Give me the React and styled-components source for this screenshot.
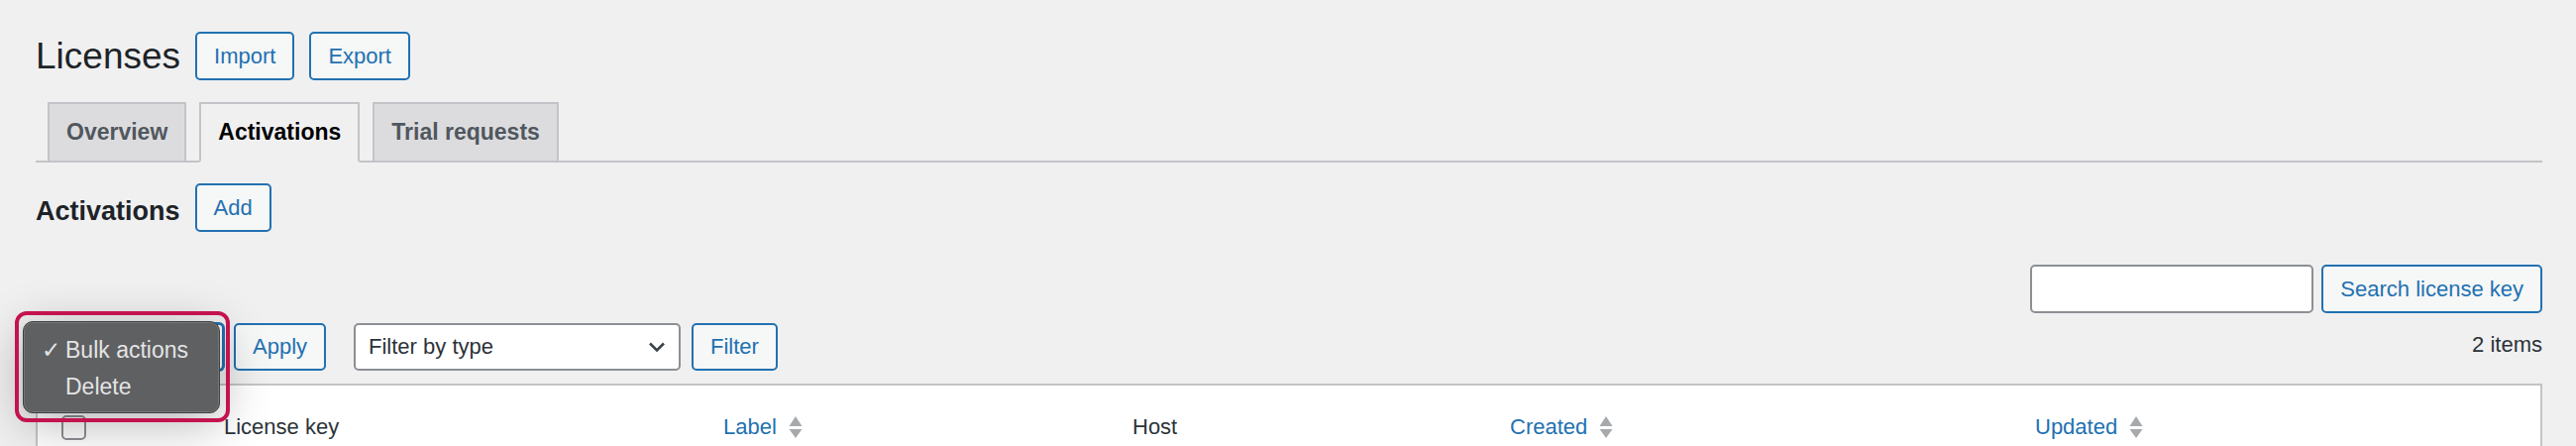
import React from "react";
import styled, { createGlobalStyle } from "styled-components";

const GlobalStyle = createGlobalStyle`
  html, body { margin: 0; padding: 0; background: #f0f0f1; }
  body { font-family: "Liberation Sans", Arial, sans-serif; color: #2c3338; }
  * { box-sizing: border-box; }
`;

const Wrap = styled.div`
  padding: 0 34px 0 36px;
  display: flex;
  flex-direction: column;
  height: 450px;
  overflow: hidden;
`;

const TitleRow = styled.div`
  margin-top: 32px;
  height: 49px;
  display: flex;
  align-items: center;
  gap: 15px;
`;

const PageTitle = styled.h1`
  margin: 0;
  font-size: 37px;
  font-weight: 400;
  color: #1d2327;
  line-height: 1;
`;

const Button = styled.button`
  height: ${(p) => p.$h || 49}px;
  padding: 0 17px;
  border: 2px solid #2271b1;
  border-radius: 5px;
  background: #f6f7f7;
  color: #2271b1;
  font-family: "Liberation Sans", Arial, sans-serif;
  font-size: 22px;
  line-height: 1;
  display: inline-flex;
  align-items: center;
  white-space: nowrap;
  cursor: pointer;
`;

const TabBar = styled.div`
  margin-top: 22px;
  display: flex;
  align-items: flex-end;
  border-bottom: 2px solid #c3c4c7;
  padding-left: 12px;
  gap: 13px;
`;

const Tab = styled.div`
  height: 61px;
  margin-bottom: -2px;
  padding: 0 17px;
  border: 2px solid #c3c4c7;
  border-bottom-color: ${(p) => (p.$active ? "#f0f0f1" : "#c3c4c7")};
  background: ${(p) => (p.$active ? "#f0f0f1" : "#dcdcde")};
  color: ${(p) => (p.$active ? "#000" : "#50575e")};
  font-size: 23px;
  font-weight: 700;
  display: flex;
  align-items: center;
  white-space: nowrap;
`;

const SectionRow = styled.div`
  margin-top: 21px;
  height: 49px;
  display: flex;
  align-items: center;
  gap: 15px;
`;

const SectionTitle = styled.h2`
  margin: 0;
  padding-top: 7px;
  font-size: 27px;
  font-weight: 700;
  color: #1d2327;
  line-height: 1;
`;

const SearchRow = styled.div`
  margin-top: 33px;
  display: flex;
  justify-content: flex-end;
  gap: 8px;
`;

const TextInput = styled.input`
  width: 286px;
  height: 49px;
  border: 2px solid #8c8f94;
  border-radius: 5px;
  background: #fff;
  font-size: 22px;
`;

const NavRow = styled.div`
  margin-top: 10px;
  height: 48px;
  display: flex;
  align-items: center;
`;

const BulkWrap = styled.div`
  position: relative;
  margin-right: 10px;
`;

const Select = styled.div`
  width: ${(p) => p.$w}px;
  height: 48px;
  border: 2px solid ${(p) => (p.$focus ? "#2271b1" : "#8c8f94")};
  box-shadow: ${(p) => (p.$focus ? "0 0 0 1px #2271b1" : "none")};
  border-radius: 5px;
  background: #fff;
  color: #2c3338;
  font-size: 22px;
  display: flex;
  align-items: center;
  justify-content: space-between;
  padding: 0 13px 0 13px;
`;

const Menu = styled.div`
  position: absolute;
  left: -13px;
  top: -2px;
  width: 199px;
  height: 93px;
  border-radius: 10px;
  background: #5e6062;
  border: 1px solid #3f4041;
  box-shadow: inset 0 0 0 1px rgba(255, 255, 255, 0.14),
    0 10px 50px rgba(0, 0, 0, 0.3);
  padding: 10px 0 0 0;
  z-index: 5;
`;

const MenuItem = styled.div`
  height: 37px;
  line-height: 37px;
  font-size: 23px;
  color: #e4e4e4;
  display: flex;
  align-items: center;
  white-space: nowrap;
`;

const Check = styled.span`
  width: 42px;
  padding-left: 18px;
  font-family: "DejaVu Sans", sans-serif;
  font-size: 23px;
  color: #e4e4e4;
`;

const Highlight = styled.div`
  position: absolute;
  left: -21px;
  top: -12px;
  width: 217px;
  height: 112px;
  border: 4px solid #c4134f;
  border-radius: 12px;
  z-index: 6;
  pointer-events: none;
`;

const Count = styled.div`
  margin-left: auto;
  font-size: 22px;
  color: #2c3338;
  padding-bottom: 4px;
`;

const Table = styled.div`
  margin-top: 13px;
  border: 2px solid #c3c4c7;
  background: #fff;
  display: grid;
  grid-template-columns: 172px 504px 413px 381px 530px 1fr;
  min-height: 200px;
  align-content: start;
`;

const HeadCell = styled.div`
  height: 82px;
  padding-top: 2px;
  display: flex;
  align-items: center;
  padding-left: ${(p) => (p.$cb ? 24 : 16)}px;
  font-size: 22px;
  color: ${(p) => (p.$link ? "#2271b1" : "#2c3338")};
  white-space: nowrap;
`;

const Checkbox = styled.span`
  width: 25px;
  height: 25px;
  border: 2px solid #8c8f94;
  border-radius: 5px;
  background: #fff;
  display: inline-block;
`;

const SortIcon = styled.svg`
  margin-left: 12px;
  flex: none;
`;

const Sort = () => (
  <SortIcon width="14" height="24" viewBox="0 0 14 24">
    <polygon points="7,1 13.5,11 0.5,11" fill="#a7aaad" />
    <polygon points="0.5,14 13.5,14 7,23" fill="#a7aaad" />
  </SortIcon>
);

const Chevron = () => (
  <svg width="18" height="12" viewBox="0 0 18 12">
    <path d="M2 2.5 L9 9.5 L16 2.5" fill="none" stroke="#3c434a" strokeWidth="2.6" />
  </svg>
);

export default function App() {
  return (
    <>
      <GlobalStyle />
      <Wrap>
        <TitleRow>
          <PageTitle>Licenses</PageTitle>
          <Button>Import</Button>
          <Button>Export</Button>
        </TitleRow>

        <TabBar>
          <Tab>Overview</Tab>
          <Tab $active>Activations</Tab>
          <Tab>Trial requests</Tab>
        </TabBar>

        <SectionRow>
          <SectionTitle>Activations</SectionTitle>
          <Button>Add</Button>
        </SectionRow>

        <SearchRow>
          <TextInput type="text" />
          <Button>Search license key</Button>
        </SearchRow>

        <NavRow>
          <BulkWrap>
            <Select $w={190} $focus />
            <Menu>
              <MenuItem>
                <Check>✓</Check>Bulk actions
              </MenuItem>
              <MenuItem>
                <Check />Delete
              </MenuItem>
            </Menu>
            <Highlight />
          </BulkWrap>
          <Button $h={48}>Apply</Button>
          <Select $w={330} style={{ marginLeft: 28, marginRight: 11 }}>
            <span>Filter by type</span>
            <Chevron />
          </Select>
          <Button $h={48}>Filter</Button>
          <Count>2 items</Count>
        </NavRow>

        <Table>
          <HeadCell $cb>
            <Checkbox />
          </HeadCell>
          <HeadCell>License key</HeadCell>
          <HeadCell $link>
            Label
            <Sort />
          </HeadCell>
          <HeadCell>Host</HeadCell>
          <HeadCell $link>
            Created
            <Sort />
          </HeadCell>
          <HeadCell $link>
            Updated
            <Sort />
          </HeadCell>
        </Table>
      </Wrap>
    </>
  );
}
